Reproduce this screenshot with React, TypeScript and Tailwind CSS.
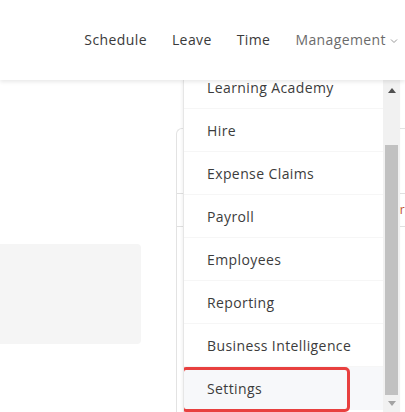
const navItems = ["Schedule", "Leave", "Time"];

const menuItems = [
  "Learning Academy",
  "Hire",
  "Expense Claims",
  "Payroll",
  "Employees",
  "Reporting",
  "Business Intelligence",
];

export default function App() {
  return (
    <div className="relative w-[405px] h-[412px] overflow-hidden bg-white font-['Open_Sans',sans-serif] text-[14px] tracking-[0.4px]">
      {/* top bar */}
      <header className="relative z-20 h-[80px] bg-white shadow-[0_2px_4px_rgba(0,0,0,0.09)] flex items-center justify-end pr-[7px] gap-[25px] text-[#3a3a3a] pb-[1px]">
        {navItems.map((n) => (
          <span key={n}>{n}</span>
        ))}
        <span className="flex items-center gap-[4px] text-[#6b6b6b]">
          Management
          <svg width="8" height="6" viewBox="0 0 8 6" fill="none" className="mt-[2px]">
            <path d="M1 1.5l3 3 3-3" stroke="#9a9a9a" strokeWidth="1" />
          </svg>
        </span>
      </header>

      {/* page content behind the menu */}
      <main className="flex pt-[48px]">
        <div className="w-[176px] shrink-0 pt-[116px]">
          <div className="w-[141px] h-[100px] bg-[#f5f5f5] rounded-r-[4px]" />
        </div>
        <div className="flex-1 h-[300px] border-l border-t border-[#e3e3e3] rounded-tl-[6px]">
          <div className="h-[64px]" />
          <div className="border-t border-b border-[#e0e0e0] h-[34px] flex items-center justify-end">
            <span className="text-[12px] leading-none">
              <span className="text-[#2f7fd0]">'</span>
              <span className="text-[#c0502a]">r</span>
            </span>
          </div>
        </div>
      </main>

      {/* dropdown menu */}
      <div className="absolute z-10 left-[183px] top-[80px] w-[217px] bottom-0 flex bg-white border-l border-[#e6e6e6] shadow-[-1px_0_3px_rgba(0,0,0,0.06)]">
        <div className="flex-1 overflow-hidden">
          <ul className="-mt-[14px] text-[#3c3c3c]">
            {menuItems.map((m) => (
              <li key={m} className="h-[43px] flex items-center pl-[23px] border-b border-[#f6f6f6]">
                {m}
              </li>
            ))}
            <li className="relative h-[43px] flex items-center pl-[23px] bg-[#f7f8fa]">
              <div className="absolute left-[-3px] top-[0px] w-[169px] h-[45px] border-[3px] border-[#e8403f] rounded-[5px]" />
              Settings
            </li>
          </ul>
        </div>
        {/* scrollbar */}
        <div className="w-[17px] bg-[#f1f1f1] flex flex-col items-center">
          <div className="h-[17px] flex items-center justify-center mt-[2px]">
            <svg width="8" height="5" viewBox="0 0 8 5">
              <path d="M0 5L4 0l4 5z" fill="#505050" />
            </svg>
          </div>
          <div className="mt-[46px] w-[13px] h-[250px] bg-[#c1c1c1]" />
          <div className="h-[17px] flex items-center justify-center">
            <svg width="8" height="5" viewBox="0 0 8 5">
              <path d="M0 0h8L4 5z" fill="#a3a3a3" />
            </svg>
          </div>
        </div>
      </div>
    </div>
  );
}
